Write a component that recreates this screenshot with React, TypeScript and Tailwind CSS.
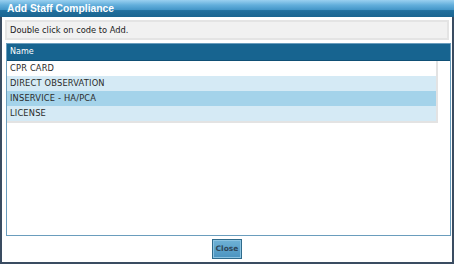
import React from "react";

const rows = [
  { name: "CPR CARD", bg: "bg-white" },
  { name: "DIRECT OBSERVATION", bg: "bg-[#d5eaf5]" },
  { name: "INSERVICE - HA/PCA", bg: "bg-[#a4d3ea]" },
  { name: "LICENSE", bg: "bg-[#d5eaf5]" },
];

export default function App() {
  return (
    <div className="w-[454px] h-[264px] flex flex-col bg-white border-x-2 border-b-2 border-[#3a4c61] font-['DejaVu_Sans',sans-serif]">
      <div className="h-[17px] shrink-0 -mx-[2px] bg-[linear-gradient(to_bottom,#9ad0f0_0%,#62aedb_30%,#4496c8_58%,#22709e_62%,#1b6590_100%)] pl-[7px] text-white font-bold text-[10.3px] leading-[18px] font-['Liberation_Sans',Arial,sans-serif]">
        Add Staff Compliance
      </div>
      <div className="mt-[3px] mx-[3px] h-[20px] shrink-0 bg-[#f1f1f1] border-2 border-[#e4e4e4] pl-[3px] text-[8.3px] leading-[16px] text-[#222]">
        Double click on code to Add.
      </div>
      <div className="mt-[3px] ml-[4px] mr-[1px] flex-1 border border-[#6a9dbd] flex flex-col">
        <div className="h-[17px] shrink-0 bg-[#176490] border-b border-[#0f4f75] text-white text-[8px] leading-[16px] pl-[3px]">
          Name
        </div>
        <div className="w-[431px] border-r-2 border-b-2 border-[#e3e3e3]">
          {rows.map((r) => (
            <div
              key={r.name}
              className={`h-[15px] ${r.bg} pl-[3px] text-[8.3px] tracking-[0.17px] leading-[15px] text-[#2a2a2a]`}
            >
              {r.name}
            </div>
          ))}
        </div>
      </div>
      <div className="h-[26px] shrink-0 flex items-center justify-center">
        <button className="w-[30px] h-[20px] border border-[#2f6b8c] bg-[linear-gradient(to_bottom,#6fb2d6,#4a93bf)] shadow-[inset_0_0_0_1px_#8cc4e2] text-[7.5px] font-bold text-[#2f4658] leading-none">
          Close
        </button>
      </div>
    </div>
  );
}
